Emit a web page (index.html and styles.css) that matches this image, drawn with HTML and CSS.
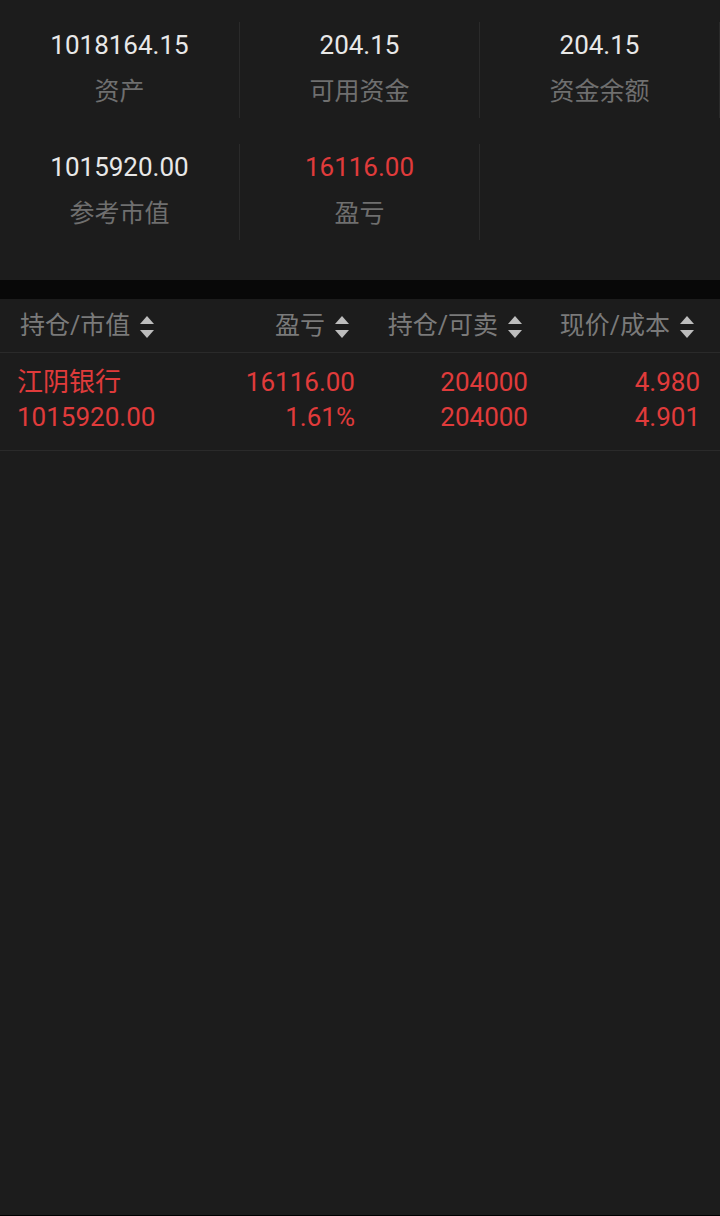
FILE: index.html
```html
<!DOCTYPE html>
<html>
<head>
  <meta charset="utf-8">
  <title>持仓</title>
  <link rel="stylesheet" href="styles.css">
</head>
<body>
  <!-- 资金概览 -->
  <div class="summary">
    <div class="cell">
      <div class="value">1018164.15</div>
      <div class="label">资产</div>
    </div>
    <div class="cell">
      <div class="value">204.15</div>
      <div class="label">可用资金</div>
    </div>
    <div class="cell">
      <div class="value">204.15</div>
      <div class="label">资金余额</div>
    </div>
    <div class="cell">
      <div class="value">1015920.00</div>
      <div class="label">参考市值</div>
    </div>
    <div class="cell">
      <div class="value red">16116.00</div>
      <div class="label">盈亏</div>
    </div>
  </div>

  <div class="band"></div>

  <!-- 持仓列表 -->
  <div class="table">
    <div class="row head">
      <div class="th left">持仓/市值 <span class="sort"><i class="up"></i><i class="down"></i></span></div>
      <div class="th">盈亏 <span class="sort"><i class="up"></i><i class="down"></i></span></div>
      <div class="th">持仓/可卖 <span class="sort"><i class="up"></i><i class="down"></i></span></div>
      <div class="th">现价/成本 <span class="sort"><i class="up"></i><i class="down"></i></span></div>
    </div>
    <div class="row item">
      <div class="td left">江阴银行<br>1015920.00</div>
      <div class="td">16116.00<br>1.61%</div>
      <div class="td">204000<br>204000</div>
      <div class="td">4.980<br>4.901</div>
    </div>
  </div>
</body>
</html>
```

FILE: styles.css
```css
html, body {
  margin: 0;
  height: 100%;
}

body {
  background-color: #1c1c1c;
  font-family: Roboto, "Noto Sans CJK SC", sans-serif;
  color: #e6e6e6;
  box-sizing: border-box;
  border-bottom: 1px solid #000;
}

.summary {
  display: grid;
  grid-template-columns: repeat(3, 240px);
  row-gap: 26px;
  padding: 22px 0 40px;
}

.cell {
  height: 96px;
  border-right: 1px solid #2a2a2a;
  text-align: center;
}

.value {
  font-size: 26px;
  line-height: 46px;
  color: #e8e8e8;
}

.label {
  font-size: 25px;
  line-height: 48px;
  color: #6f6f6f;
}

.red {
  color: #e03b3b;
}

.band {
  height: 19px;
  background-color: #080808;
}

.row {
  display: grid;
  grid-template-columns: 168px 170px 173px 172px;
  padding: 0 20px 0 17px;
  border-bottom: 1px solid #2a2a2a;
}

.head {
  height: 53px;
  line-height: 53px;
  font-size: 25px;
  color: #7a7a7a;
}

.th {
  display: flex;
  align-items: center;
  justify-content: flex-end;
  gap: 10px;
  padding-right: 6px;
  white-space: nowrap;
}

.th.left {
  justify-content: flex-start;
  padding-left: 3px;
}

.sort {
  display: flex;
  flex-direction: column;
  gap: 6px;
  margin-top: 2px;
}

.sort i {
  width: 0;
  height: 0;
  border-left: 7px solid transparent;
  border-right: 7px solid transparent;
}

.sort .up {
  border-bottom: 8px solid #bdbdbd;
}

.sort .down {
  border-top: 8px solid #bdbdbd;
}

.item {
  padding-top: 12px;
  padding-bottom: 15px;
  font-size: 26px;
  line-height: 35px;
  color: #e03b3b;
}

.td {
  text-align: right;
}

.td.left {
  text-align: left;
}
```
